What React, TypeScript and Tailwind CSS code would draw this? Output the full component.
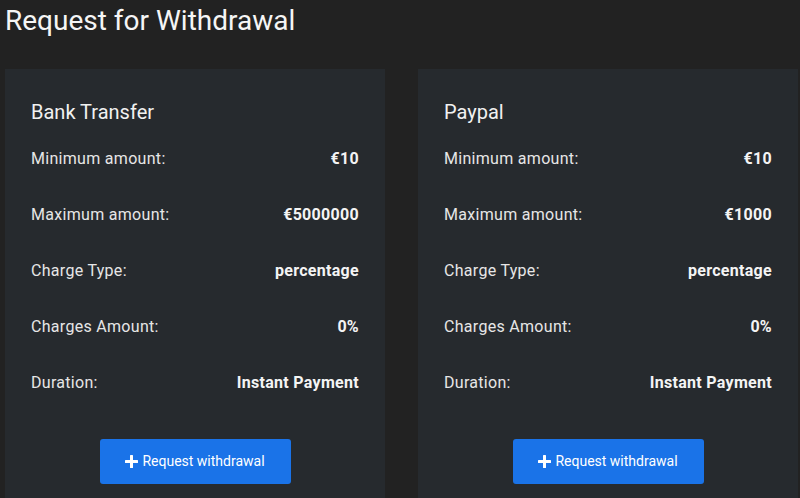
import React from "react";

type Method = {
  name: string;
  rows: [string, string][];
};

const methods: Method[] = [
  {
    name: "Bank Transfer",
    rows: [
      ["Minimum amount:", "€10"],
      ["Maximum amount:", "€5000000"],
      ["Charge Type:", "percentage"],
      ["Charges Amount:", "0%"],
      ["Duration:", "Instant Payment"],
    ],
  },
  {
    name: "Paypal",
    rows: [
      ["Minimum amount:", "€10"],
      ["Maximum amount:", "€1000"],
      ["Charge Type:", "percentage"],
      ["Charges Amount:", "0%"],
      ["Duration:", "Instant Payment"],
    ],
  },
];

function Card({ m }: { m: Method }) {
  return (
    <div className="bg-[#262a2e] px-[26px] pt-[29px] pb-[20px] flex flex-col">
      <h2 className="text-[20px] leading-[28px] text-[#f1f1f1]">{m.name}</h2>
      <div className="mt-[5px] flex flex-col">
        {m.rows.map(([k, v]) => (
          <div key={k} className="h-[56px] flex items-center justify-between text-[16px] tracking-[0.3px]">
            <span className="text-[#e6e6e6]">{k}</span>
            <span className="font-bold text-[#f4f4f4]">{v}</span>
          </div>
        ))}
      </div>
      <div className="mt-[28px] flex justify-center">
        <button className="w-[191px] h-[45px] rounded-[3px] bg-[#1a73e8] text-white text-[14px] flex items-center justify-center gap-[4px]">
          <svg width="13" height="13" viewBox="0 0 13 13" fill="white">
            <rect x="5" y="0" width="3" height="13" rx="0.5" />
            <rect x="0" y="5" width="13" height="3" rx="0.5" />
          </svg>
          <span>Request withdrawal</span>
        </button>
      </div>
    </div>
  );
}

export default function App() {
  return (
    <div
      className="min-h-[498px] h-[498px] overflow-hidden bg-[#222222] pl-[5px] pr-[2px]"
      style={{ fontFamily: "Roboto, 'Noto Sans', sans-serif" }}
    >
      <h1 className="text-[28px] leading-[34px] pt-[4px] text-[#f5f5f5]">Request for Withdrawal</h1>
      <div className="mt-[31px] grid grid-cols-2 gap-[33px]">
        {methods.map((m) => (
          <Card key={m.name} m={m} />
        ))}
      </div>
    </div>
  );
}
